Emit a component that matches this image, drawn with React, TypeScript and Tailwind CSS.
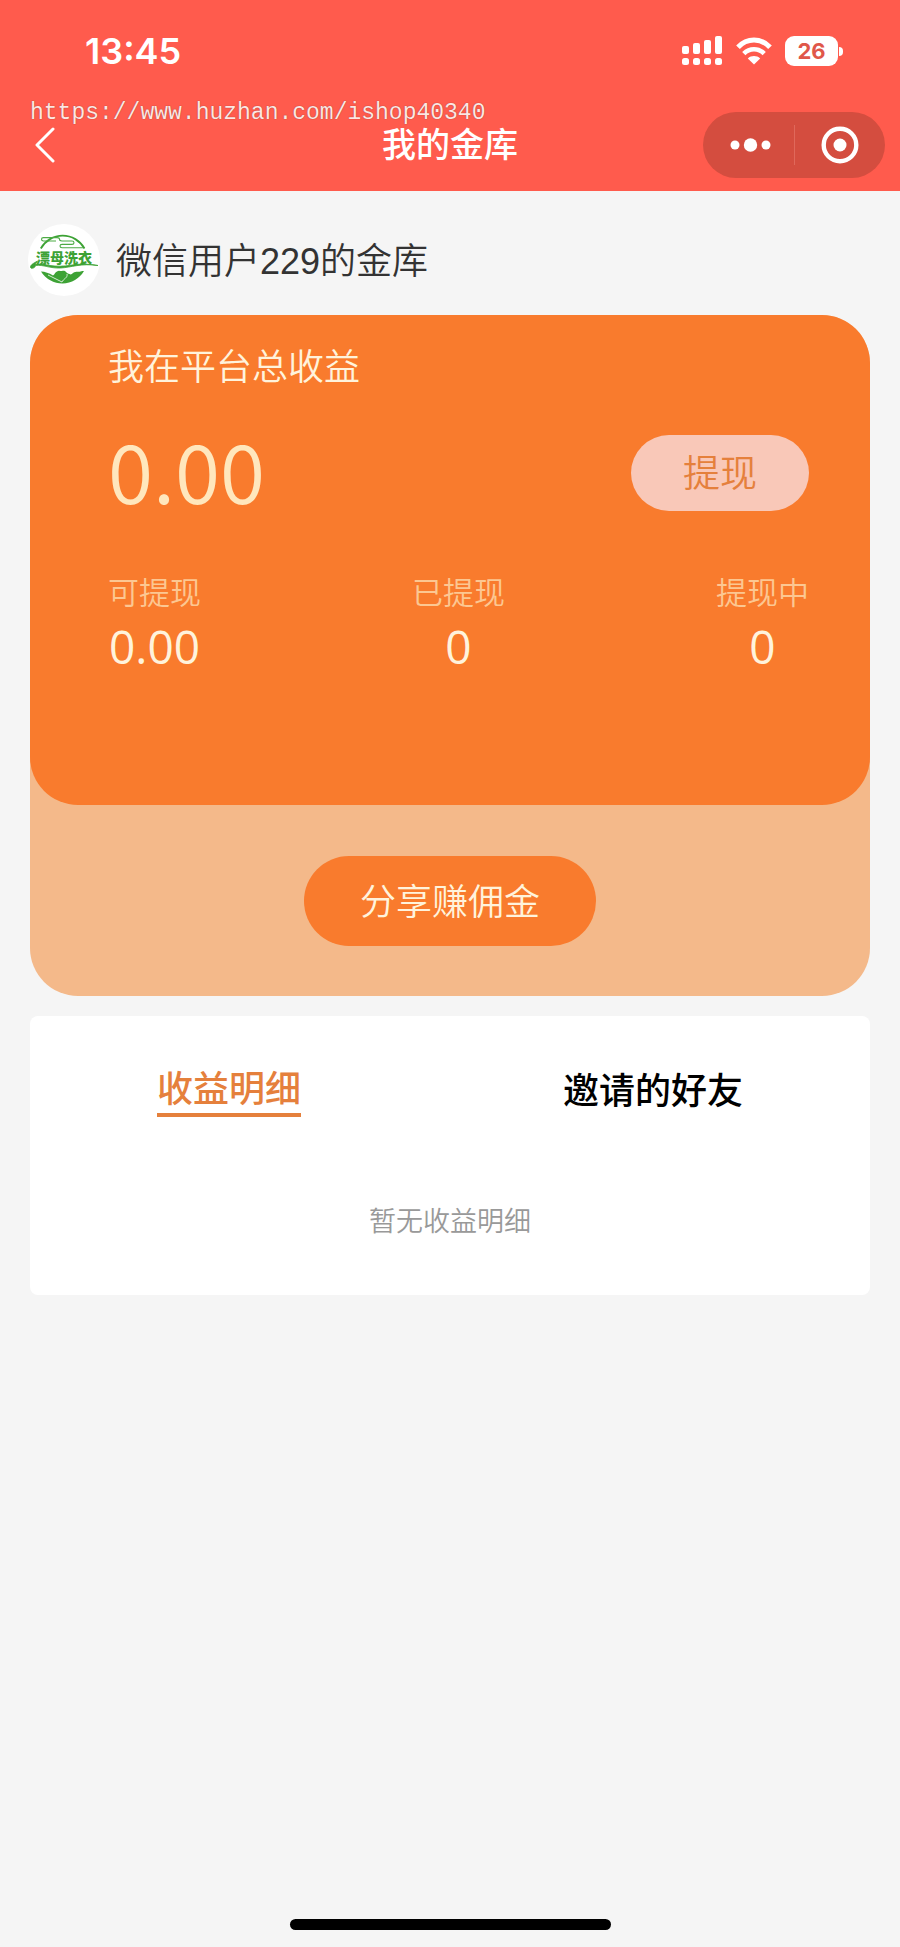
import React, { useState } from 'react';

type TabKey = 'income' | 'friends';

const STATS = [
  { label: '可提现', value: '0.00' },
  { label: '已提现', value: '0' },
  { label: '提现中', value: '0' },
];

const TABS: { key: TabKey; label: string; empty: string }[] = [
  { key: 'income', label: '收益明细', empty: '暂无收益明细' },
  { key: 'friends', label: '邀请的好友', empty: '暂无邀请的好友' },
];

function SignalIcon() {
  return (
    <svg width="42" height="30" viewBox="0 0 42 30" fill="currentColor" aria-hidden="true">
      <rect x="1" y="10" width="7" height="8" rx="2" />
      <rect x="12" y="7" width="7" height="11" rx="2" />
      <rect x="23" y="4" width="7" height="14" rx="2" />
      <rect x="34" y="0" width="7" height="18" rx="2" />
      <rect x="1" y="22" width="7" height="7" rx="2.5" />
      <rect x="12" y="22" width="7" height="7" rx="2.5" />
      <rect x="23" y="22" width="7" height="7" rx="2.5" />
      <rect x="34" y="22" width="7" height="7" rx="2.5" />
    </svg>
  );
}

function WifiIcon() {
  return (
    <svg width="36" height="28" viewBox="0 0 36 28" fill="none" aria-hidden="true">
      <path d="M2 10.2C11 .6 25 .6 34 10.2" stroke="currentColor" strokeWidth="5" />
      <path d="M7.8 16.6c5.8-5.8 14.6-5.8 20.4 0" stroke="currentColor" strokeWidth="4.6" />
      <path d="M18 27.5l-6.2-6c3.6-3.2 8.8-3.2 12.4 0z" fill="currentColor" />
    </svg>
  );
}

function BackIcon() {
  return (
    <svg width="22" height="38" viewBox="0 0 22 38" fill="none" aria-hidden="true">
      <path d="M20 3L4 19l16 16" stroke="currentColor" strokeWidth="3" strokeLinecap="round" strokeLinejoin="round" />
    </svg>
  );
}

function Logo() {
  return (
    <svg className="size-[72px] rounded-full bg-white" viewBox="0 0 72 72" fill="none" role="img" aria-label="漂母洗衣">
      <path d="M12.8 24.5A25 25 0 0 1 56.5 24.5" stroke="#3da235" strokeWidth="1.8" />
      <path
        d="M28 17H15.5q-2 0-2-1.700t2-1.700H29q2.500 0 2.500 1.700T34 17h10q2 0 2 1.700t-2 1.700H34q-2 0-2 1.700t2 1.700h21"
        stroke="#4dab45"
        strokeWidth="1.1"
      />
      <text
        x="36"
        y="39"
        textAnchor="middle"
        fontSize="14"
        fontWeight="900"
        fill="#3da235"
        fontFamily='"Noto Sans CJK SC", sans-serif'
      >
        漂母洗衣
      </text>
      <path
        d="M9.500 37C6 39 2 41 2.500 43.500c1 2 5 0 5-2 8-1 14 3 25 2.500C43 43.500 53 39 70 41.500 60 40 54 39.500 44 41c-9 1.500-15 1.500-22 .500-6-1-10-2-15-1z"
        fill="#3da235"
        stroke="#3da235"
        strokeWidth=".8"
      />
      {/* water and hills under the lettering */}
      <path
        d="M13 47.500c4 .200 8 1.500 12 4 2-1 2-3.500 4-4 2-1.500 3.500 0 5-.500 2-.500 3.500 0 4.500 1.500 1 1.500 3 1 4 2 2-.500 3-2.500 5-2.500 2-1 3 .500 5-.500 1.500-.500 2-.500 3.500-.500A25 25 0 0 1 13 47.500z"
        fill="#3da235"
      />
      <path d="M20 51c5 2 9 5 14 7 1-3 6-4 5-8" stroke="#fff" strokeWidth=".8" />
    </svg>
  );
}

function StatusBar() {
  return (
    <div className="flex h-[102px] items-center justify-between pr-[57px] pl-[85px]">
      <span className="font-['Inter',sans-serif] text-[36px] leading-none font-semibold">13:45</span>
      <div className="flex items-center gap-[13px]">
        <SignalIcon />
        <WifiIcon />
        <div className="flex items-center gap-px">
          <span className="flex h-[30px] w-[53px] items-center justify-center rounded-[9px] bg-white font-['Inter',sans-serif] text-[22px] leading-none font-bold text-[#e0574a]">
            26
          </span>
          <span className="h-[9px] w-[4px] rounded-r-full bg-white" />
        </div>
      </div>
    </div>
  );
}

function NavBar() {
  return (
    <div className="grid h-[89px] grid-cols-[1fr_auto_1fr] items-center px-[15px] pb-[4px]">
      <button type="button" aria-label="返回" className="justify-self-start px-[18px]">
        <BackIcon />
      </button>
      <h1 className="text-[34px] leading-none font-medium">我的金库</h1>
      <div className="flex h-[66px] w-[182px] items-center justify-self-end rounded-full bg-[#d44d3f]">
        <button type="button" aria-label="更多" className="flex flex-1 justify-center">
          <svg width="46" height="14" viewBox="-5 0 46 14" fill="currentColor" aria-hidden="true">
            <circle cx="5" cy="7" r="4.5" />
            <circle cx="20.5" cy="7" r="6.7" />
            <circle cx="36" cy="7" r="4.5" />
          </svg>
        </button>
        <span className="h-[40px] w-px bg-[#e0685b]" />
        <button type="button" aria-label="关闭" className="flex flex-1 justify-center">
          <svg width="38" height="38" viewBox="0 0 38 38" fill="none" aria-hidden="true">
            <circle cx="19" cy="19" r="16.3" stroke="currentColor" strokeWidth="4.4" />
            <circle cx="19" cy="19" r="6.5" fill="currentColor" />
          </svg>
        </button>
      </div>
    </div>
  );
}

export default function App() {
  const [activeTab, setActiveTab] = useState<TabKey>('income');
  const current = TABS.find((tab) => tab.key === activeTab)!;

  return (
    <div className="flex min-h-screen flex-col bg-[#f5f5f5] font-['Liberation_Sans','Noto_Sans_CJK_SC',sans-serif] text-[#333]">
      <header className="relative bg-[#ff5b4d] text-white">
        <StatusBar />
        <NavBar />
        <span className="absolute top-[99px] left-[30px] font-['Liberation_Mono',monospace] text-[23px] leading-[28px] text-[#ffe6e2] [text-shadow:0_0_1px_#7d2f28]">
          https://www.huzhan.com/ishop40340
        </span>
      </header>

      <main className="flex flex-col px-[30px]">
        <div className="-ml-[2px] flex items-center gap-[16px] pt-[33px] pb-[19px]">
          <Logo />
          <h2 className="pt-1 text-[36px] leading-none font-[350]">微信用户229的金库</h2>
        </div>

        <section className="rounded-[48px] bg-[#f4b98a]">
          <div className="rounded-[48px] bg-[#f97b2d] pt-[28px] pr-[61px] pb-[130px] pl-[78px]">
            <p className="text-[36px] leading-[50px] font-[350] text-[#fff3dc]">我在平台总收益</p>
            <div className="mt-[42px] flex items-center justify-between">
              <span className="pb-2 font-['Noto_Sans_CJK_SC',sans-serif] text-[82px] leading-[60px] font-[350] text-[#ffe7bd]">0.00</span>
              <button type="button" className="h-[76px] w-[178px] rounded-full bg-[#f9c8b8] pt-[2px] text-[37px] leading-none font-[350] text-[#e5803c]">
                提现
              </button>
            </div>
            <dl className="mt-[60px] flex justify-between">
              {STATS.map((stat) => (
                <div key={stat.label} className="text-center">
                  <dt className="text-[31px] leading-[46px] font-[350] text-[#fcc792]">{stat.label}</dt>
                  <dd className="font-['Open_Sans',sans-serif] text-[46px] leading-[58px] font-normal text-[#fff3dc]">{stat.value}</dd>
                </div>
              ))}
            </dl>
          </div>
          <div className="flex justify-center pt-[51px] pb-[50px]">
            <button type="button" className="h-[90px] w-[292px] rounded-full bg-[#f97b2d] pt-1 text-[36px] leading-none font-[350] text-[#fff3dc]">
              分享赚佣金
            </button>
          </div>
        </section>

        <section className="mt-[20px] rounded-[8px] bg-white pt-[51px] pb-[53px]">
          <div role="tablist" className="flex items-center justify-between px-[127px]">
            {TABS.map((tab) => (
              <button
                key={tab.key}
                type="button"
                role="tab"
                aria-selected={tab.key === activeTab}
                onClick={() => setActiveTab(tab.key)}
                className={`text-[36px] leading-[46px] font-medium ${
                  tab.key === activeTab ? 'border-b-4 border-[#e5803c] text-[#e5803c]' : 'text-black'
                }`}
              >
                {tab.label}
              </button>
            ))}
          </div>
          <p className="mt-[85px] text-center text-[27px] leading-[40px] font-[350] text-[#999]">{current.empty}</p>
        </section>
      </main>

      <div className="mx-auto mt-auto mb-[17px] h-[11px] w-[321px] rounded-full bg-black" />
    </div>
  );
}
